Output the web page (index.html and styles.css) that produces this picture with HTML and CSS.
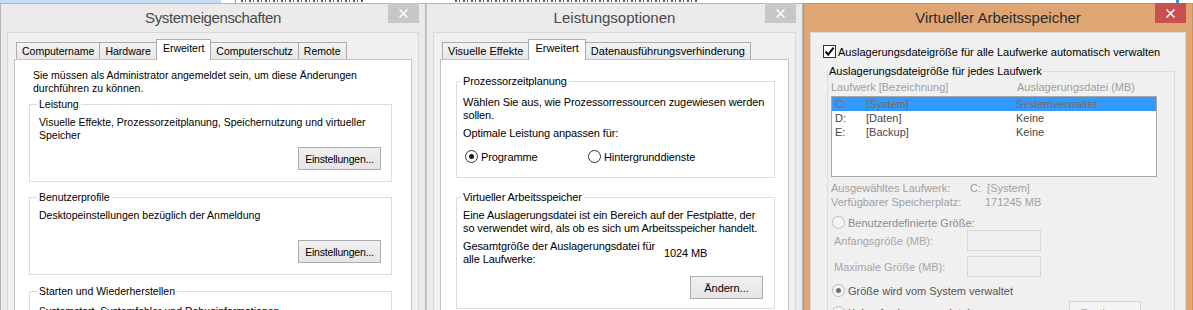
FILE: index.html
```html
<!DOCTYPE html>
<html lang="de">
<head>
  <meta charset="UTF-8">
  <title>Systemeigenschaften</title>
  <link rel="stylesheet" href="styles.css">
</head>
<body>
  <div class="backdrop">
    <div class="bd-blue"></div>
    <div class="bd-line"></div>
    <div class="bd-text bd-text-a"></div>
    <div class="bd-text bd-text-b"></div>
    <div class="bd-tick"></div>
  </div>

  <div class="desk">
    <!-- Systemeigenschaften -->
    <section class="win win-sys">
      <header class="titlebar">
        <span class="title title-sys">Systemeigenschaften</span>
        <button class="close">
          <svg width="9" height="9" viewBox="0 0 9 9"><path d="M0.5 0.5L8.5 8.5M8.5 0.5L0.5 8.5" stroke="#fff" stroke-width="1.5"/></svg>
        </button>
      </header>
      <div class="client">
        <div class="tabs">
          <div class="tab">Computername</div>
          <div class="tab">Hardware</div>
          <div class="tab active">Erweitert</div>
          <div class="tab">Computerschutz</div>
          <div class="tab">Remote</div>
        </div>
        <div class="panel panel-sys">
          <p class="note">Sie müssen als Administrator angemeldet sein, um diese Änderungen<br>durchführen zu können.</p>

          <fieldset class="group group-perf">
            <legend>Leistung</legend>
            <p class="text">Visuelle Effekte, Prozessorzeitplanung, Speichernutzung und virtueller<br>Speicher</p>
            <div class="btn-row"><button class="btn btn-wide">Einstellungen...</button></div>
          </fieldset>

          <fieldset class="group group-profile">
            <legend>Benutzerprofile</legend>
            <p class="text">Desktopeinstellungen bezüglich der Anmeldung</p>
            <div class="btn-row"><button class="btn btn-wide">Einstellungen...</button></div>
          </fieldset>

          <fieldset class="group group-start">
            <legend>Starten und Wiederherstellen</legend>
            <p class="text">Systemstart, Systemfehler und Debuginformationen</p>
          </fieldset>
        </div>
      </div>
    </section>

    <!-- Leistungsoptionen -->
    <section class="win win-perf">
      <header class="titlebar">
        <span class="title">Leistungsoptionen</span>
        <button class="close">
          <svg width="9" height="9" viewBox="0 0 9 9"><path d="M0.5 0.5L8.5 8.5M8.5 0.5L0.5 8.5" stroke="#fff" stroke-width="1.5"/></svg>
        </button>
      </header>
      <div class="client">
        <div class="tabs">
          <div class="tab">Visuelle Effekte</div>
          <div class="tab active">Erweitert</div>
          <div class="tab">Datenausführungsverhinderung</div>
        </div>
        <div class="panel panel-perf">
          <fieldset class="group group-cpu">
            <legend>Prozessorzeitplanung</legend>
            <p class="text">Wählen Sie aus, wie Prozessorressourcen zugewiesen werden<br>sollen.</p>
            <p class="text text-gap">Optimale Leistung anpassen für:</p>
            <div class="radio-row">
              <label class="option option-first"><span class="radio on"></span>Programme</label>
              <label class="option"><span class="radio"></span>Hintergrunddienste</label>
            </div>
          </fieldset>

          <fieldset class="group group-vmem">
            <legend>Virtueller Arbeitsspeicher</legend>
            <p class="text">Eine Auslagerungsdatei ist ein Bereich auf der Festplatte, der<br>so verwendet wird, als ob es sich um Arbeitsspeicher handelt.</p>
            <div class="total">
              <span class="total-label">Gesamtgröße der Auslagerungsdatei für<br>alle Laufwerke:</span>
              <span>1024 MB</span>
            </div>
            <div class="btn-row btn-row-change"><button class="btn btn-change">Ändern...</button></div>
          </fieldset>
        </div>
      </div>
    </section>

    <!-- Virtueller Arbeitsspeicher -->
    <section class="win win-vm">
      <header class="titlebar">
        <span class="title">Virtueller Arbeitsspeicher</span>
        <button class="close close-active">
          <svg width="9" height="9" viewBox="0 0 9 9"><path d="M0.5 0.5L8.5 8.5M8.5 0.5L0.5 8.5" stroke="#fff" stroke-width="1.5"/></svg>
        </button>
      </header>
      <div class="client vm-body">
        <label class="check-row">
          <span class="checkbox">
            <svg width="11" height="11" viewBox="0 0 11 11"><path d="M1.5 5.5L4.2 8.6L9.6 1.6" stroke="#111" stroke-width="2" fill="none"/></svg>
          </span>
          Auslagerungsdateigröße für alle Laufwerke automatisch verwalten
        </label>

        <fieldset class="group group-drives">
          <legend>Auslagerungsdateigröße für jedes Laufwerk</legend>
          <div class="list-head">
            <span>Laufwerk [Bezeichnung]</span>
            <span>Auslagerungsdatei (MB)</span>
          </div>
          <div class="listbox">
            <div class="drive selected"><span>C:</span><span>[System]</span><span>Systemverwaltet</span></div>
            <div class="drive"><span>D:</span><span>[Daten]</span><span>Keine</span></div>
            <div class="drive"><span>E:</span><span>[Backup]</span><span>Keine</span></div>
          </div>

          <div class="info">
            <span>Ausgewähltes Laufwerk:</span><span class="info-value">C:  [System]</span>
            <span>Verfügbarer Speicherplatz:</span><span class="info-value info-free">171245 MB</span>
          </div>

          <label class="option option-disabled option-custom"><span class="radio off"></span>Benutzerdefinierte Größe:</label>
          <div class="size-row size-first">
            <span class="size-label">Anfangsgröße (MB):</span>
            <span class="input"></span>
          </div>
          <div class="size-row">
            <span class="size-label">Maximale Größe (MB):</span>
            <span class="input"></span>
          </div>
          <label class="option option-dim option-system"><span class="radio off on"></span>Größe wird vom System verwaltet</label>
          <div class="last-row">
            <label class="option option-dim"><span class="radio off"></span>Keine Auslagerungsdatei</label>
            <button class="btn btn-set">Festlegen</button>
          </div>
        </fieldset>
      </div>
    </section>
  </div>
</body>
</html>
```

FILE: styles.css
```css
* {
  box-sizing: border-box;
}

body {
  margin: 0;
  width: 1193px;
  height: 310px;
  overflow: hidden;
  background-color: #ffffff;
  font-family: 'Liberation Sans', Arial, sans-serif;
  font-size: 11px;
  color: #000000;
}

p {
  margin: 0;
}

button {
  font: inherit;
  color: inherit;
}

/* window behind the dialogs */
.backdrop {
  height: 3px;
  display: flex;
  align-items: flex-start;
}

.bd-blue {
  width: 221px;
  height: 3px;
  background-color: #c7ddf4;
}

.bd-line {
  width: 1px;
  height: 3px;
  margin-left: 14px;
  background-color: #9a9a9a;
}

.bd-text {
  height: 2px;
  background: repeating-linear-gradient(90deg, #5a5a5a 0 2px, transparent 2px 4px, #5a5a5a 4px 5px, transparent 5px 8px);
}

.bd-text-a {
  width: 122px;
  margin-left: 5px;
}

.bd-text-b {
  width: 243px;
  margin-left: 92px;
}

.bd-tick {
  width: 3px;
  height: 3px;
  margin-left: 478px;
  background-color: #3d8ee0;
}

.desk {
  display: flex;
  height: 307px;
  overflow: hidden;
}

/* window frame */
.win {
  position: relative;
  height: 340px;
  display: flex;
  flex-direction: column;
  padding: 0 6px;
  background-color: #ebebeb;
  border: 1px solid #b5b5b5;
  white-space: nowrap;
}

.win-sys {
  width: 426px;
}

.win-perf {
  width: 377px;
  border-left-color: #c9c9c9;
}

.win-vm {
  width: 390px;
  background-color: #dfa673;
  border-color: #c99262;
}

.titlebar {
  height: 28px;
  flex-shrink: 0;
  display: flex;
  align-items: center;
  justify-content: center;
  padding-bottom: 2px;
}

.title {
  font-size: 15px;
  color: #4a4a4a;
}

.title-sys {
  letter-spacing: -0.4px;
}

.win-vm .title {
  color: #2b2b2b;
}

.close {
  position: absolute;
  top: -1px;
  right: 6px;
  width: 31px;
  height: 20px;
  padding: 0;
  border: none;
  background-color: #c7c7c7;
  display: flex;
  align-items: center;
  justify-content: center;
}

.close-active {
  background-color: #c75050;
}

.client {
  flex: 1;
  display: flex;
  flex-direction: column;
  background-color: #f0f0f0;
  border: 1px solid #d9d9d9;
}

/* tabs */
.tabs {
  position: relative;
  z-index: 1;
  height: 20px;
  margin: 6px 6px 0;
  padding-left: 2px;
  display: flex;
  align-items: flex-end;
}

.tab {
  height: 17px;
  padding: 0 5px;
  margin-right: -1px;
  line-height: 16px;
  border: 1px solid #acacac;
  border-bottom: none;
  background: linear-gradient(#f3f3f3, #e7e7e7);
}

.tab.active {
  position: relative;
  z-index: 1;
  height: 21px;
  margin-bottom: -1px;
  padding: 0 6px;
  line-height: 17px;
  background: #ffffff;
}

.panel {
  flex: 1;
  margin: 0 6px;
  background-color: #ffffff;
  border: 1px solid #c4c4c4;
}

/* group boxes */
.group {
  margin: 0;
  min-width: 0;
  border: 1px solid #dcdcdc;
}

.group legend {
  padding: 0 2px;
  margin-left: -2px;
  line-height: 13px;
}

.text {
  line-height: 13px;
}

.btn-row {
  display: flex;
  justify-content: flex-end;
}

.btn {
  height: 23px;
  padding: 0;
  border: 1px solid #acacac;
  background: linear-gradient(#f0f0f0, #e5e5e5);
}

/* Systemeigenschaften */
.win-sys .client,
.win-sys .tab {
  font-size: 10.5px;
}

.panel-sys {
  padding: 9px 19px 0 14px;
}

.note {
  margin-left: 4px;
  line-height: 13px;
}

.panel-sys .group {
  padding: 5px 10px 11px 9px;
}

.group-perf {
  margin-top: 3px;
}

.group-perf .btn-row {
  margin-top: 5px;
}

.group-profile {
  margin-top: 9px;
  padding-bottom: 9px;
}

.group-profile .btn-row {
  margin-top: 18px;
}

.group-start {
  margin-top: 10px;
}

.panel-sys .group-start {
  padding-top: 7px;
}

.btn-wide {
  width: 83px;
  letter-spacing: -0.2px;
}

/* Leistungsoptionen */
.panel-perf {
  padding: 15px 13px 0 15px;
  letter-spacing: -0.1px;
}

.panel-perf .group {
  padding: 8px 10px 14px 6px;
}

.text-gap {
  margin-top: 5px;
}

.radio-row {
  display: flex;
  margin-top: 10px;
}

.option {
  display: flex;
  align-items: center;
  height: 13px;
}

.option-first {
  width: 125px;
  padding-left: 2px;
}

.radio {
  position: relative;
  width: 13px;
  height: 13px;
  margin-right: 3px;
  border: 1px solid #333333;
  border-radius: 50%;
  background-color: #ffffff;
}

.radio.on::after {
  content: '';
  position: absolute;
  left: 3px;
  top: 3px;
  width: 5px;
  height: 5px;
  border-radius: 50%;
  background-color: #1a1a1a;
}

.radio.off {
  border-color: #bcbcbc;
  background-color: #f4f4f4;
}

.radio.off.on::after {
  background-color: #707070;
}

.panel-perf .group-vmem {
  margin-top: 13px;
  padding: 5px 11px 9px 6px;
}

.total {
  display: flex;
  align-items: center;
  margin-top: 5px;
}

.total-label {
  width: 201px;
  line-height: 13px;
}

.btn-row-change {
  margin-top: 10px;
}

.btn-change {
  width: 73px;
}

/* Virtueller Arbeitsspeicher */
.vm-body {
  padding: 12px 10px 0 12px;
}

.check-row {
  display: flex;
  align-items: center;
  height: 13px;
}

.checkbox {
  width: 13px;
  height: 13px;
  margin-right: 2px;
  border: 1px solid #333333;
  background-color: #ffffff;
  display: flex;
  align-items: center;
  justify-content: center;
}

.group-drives {
  margin: 7px 0 0 4px;
  padding: 3px 17px 0 3px;
}

.group-drives legend {
  margin-left: -3px;
  padding: 0 1px;
}

.list-head {
  display: grid;
  grid-template-columns: 186px 1fr;
  line-height: 13px;
  color: #a0a0a0;
}

.listbox {
  height: 81px;
  margin-top: 2px;
  border: 1px solid #a6a6a6;
  background-color: #ffffff;
}

.drive {
  display: grid;
  grid-template-columns: 31px 150px 1fr;
  height: 14px;
  line-height: 14px;
  padding-left: 3px;
  color: #474747;
}

.drive.selected {
  background-color: #3399ff;
  color: #7f6a57;
}

.info {
  display: grid;
  grid-template-columns: 139px 1fr;
  margin-top: 4px;
  line-height: 14px;
  color: #a0a0a0;
  white-space: pre;
}

.info-free {
  padding-left: 15px;
}

.option-disabled {
  color: #8c8c8c;
}

.option-dim {
  color: #555555;
}

.option-custom {
  margin-top: 7px;
  padding-left: 1px;
}

.size-row {
  display: flex;
  align-items: center;
  margin-top: 5px;
  padding-left: 3px;
  color: #a6a6a6;
}

.size-first {
  margin-top: 1px;
}

.size-label {
  width: 133px;
}

.input {
  width: 74px;
  height: 21px;
  border: 1px solid #d9d9d9;
  background-color: #f0f0f0;
}

.option-system {
  margin-top: 7px;
  padding-left: 1px;
}

.last-row {
  display: flex;
  align-items: center;
  justify-content: space-between;
  margin-top: 4px;
  padding-left: 1px;
}

.btn-set {
  width: 72px;
  margin-right: 16px;
  color: #a0a0a0;
  border-color: #d5d5d5;
  background: #f4f4f4;
}
```
